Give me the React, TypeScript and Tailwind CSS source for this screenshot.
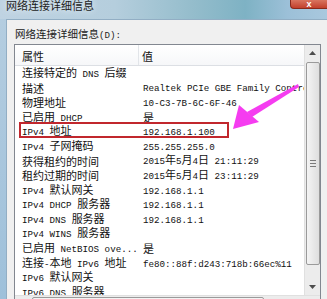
import React from 'react';

const rows: [string, string][] = [
  ['连接特定的 DNS 后缀', ''],
  ['描述', 'Realtek PCIe GBE Family Controller'],
  ['物理地址', '10-C3-7B-6C-6F-46'],
  ['已启用 DHCP', '是'],
  ['IPv4 地址', '192.168.1.100'],
  ['IPv4 子网掩码', '255.255.255.0'],
  ['获得租约的时间', '2015年5月4日 21:11:29'],
  ['租约过期的时间', '2015年5月4日 23:11:29'],
  ['IPv4 默认网关', '192.168.1.1'],
  ['IPv4 DHCP 服务器', '192.168.1.1'],
  ['IPv4 DNS 服务器', '192.168.1.1'],
  ['IPv4 WINS 服务器', ''],
  ['已启用 NetBIOS ove...', '是'],
  ['连接-本地 IPv6 地址', 'fe80::88f:d243:718b:66ec%11'],
  ['IPv6 默认网关', ''],
  ['IPv6 DNS 服务器', ''],
];

// CJK runs at 11px, latin runs in a narrow mono face like SimSun's half-width glyphs
const T = ({ s }: { s: string }) => (
  <>
    {s
      .split(/([\u0020-\u007e]+)/)
      .filter(Boolean)
      .map((p, i) =>
        /[\u0020-\u007e]/.test(p[0]) ? (
          <span key={i} className="font-['Liberation_Mono',monospace] text-[9.2px] whitespace-pre">
            {p}
          </span>
        ) : (
          <span key={i}>{p}</span>
        )
      )}
  </>
);

const VScroll = () => (
  <div className="absolute right-0 top-0 w-[16px] h-[250px] bg-[#ececec] border-l border-[#e0e0e0] flex flex-col items-center">
    <div className="h-[16px] w-full flex items-center justify-center">
      <svg width="7" height="4" viewBox="0 0 7 4"><path d="M0 4 L3.5 0 L7 4 Z" fill="#4d4d4d" /></svg>
    </div>
    <div className="mt-[1px] w-[14px] h-[203px] rounded-[2px] border border-[#9a9a9a] bg-[linear-gradient(to_right,#f4f4f4,#dedede)] flex items-center justify-center">
      <div className="flex flex-col gap-[2px]">
        <div className="w-[6px] h-[1px] bg-[#7a7a7a]" />
        <div className="w-[6px] h-[1px] bg-[#7a7a7a]" />
        <div className="w-[6px] h-[1px] bg-[#7a7a7a]" />
      </div>
    </div>
    <div className="flex-1" />
    <div className="h-[16px] w-full flex items-center justify-center">
      <svg width="7" height="4" viewBox="0 0 7 4"><path d="M0 0 L3.5 4 L7 0 Z" fill="#4d4d4d" /></svg>
    </div>
  </div>
);

const HScroll = () => (
  <div className="absolute left-0 right-0 top-[250px] h-[17px] bg-[#ececec] border-t border-[#e0e0e0] flex">
    <div className="w-[16px] flex items-center justify-center">
      <svg width="4" height="7" viewBox="0 0 4 7"><path d="M4 0 L0 3.5 L4 7 Z" fill="#4d4d4d" /></svg>
    </div>
    <div className="ml-[1px] mt-[1px] w-[232px] h-[14px] rounded-[2px] border border-[#9a9a9a] bg-[linear-gradient(to_bottom,#f4f4f4,#dedede)]" />
  </div>
);

export default function App() {
  return (
    <div className="relative w-[327px] h-[299px] overflow-hidden bg-[#f0f0f0] font-['Noto_Sans_CJK_SC','Noto_Sans',sans-serif] text-black">
      {/* title bar */}
      <div className="h-[19px] flex bg-[linear-gradient(to_right,#bfd3e2_0%,#b5cedd_35%,#93bccb_60%,#7eb2c4_75%,#9cc0d8_88%,#a9c8de_100%)]">
        <div className="pl-[6px] text-[11px] leading-[11px] text-[#1b1b1b] [text-shadow:0_0_6px_rgba(255,255,255,0.9)]">
          网络连接详细信息
        </div>
        <div className="ml-auto w-[37px] h-[9px] rounded-bl-[4px] bg-[linear-gradient(to_bottom,#d9745f,#c2402c)] border-b border-l border-[#8a2a1c] flex items-center justify-center">
          <span className="text-white text-[9px] leading-[9px] font-bold font-['Liberation_Sans',sans-serif]">x</span>
        </div>
      </div>

      <div className="flex h-[280px]">
        {/* left frame */}
        <div className="w-[6px] bg-[linear-gradient(to_bottom,#b4cde0,#9ec0da)]" />
        {/* client area */}
        <div className="flex-1 border-l border-t border-[#92aec4] bg-[#f0f0f0] pl-[7px] pt-[8px]">
          <div className="pl-[1px] text-[10.5px] leading-[11px] text-[#222]">
            网络连接详细信息<T s="(D):" />
          </div>
          <div className="mt-[3px] relative w-[307px] h-[270px] border border-[#828790] bg-white overflow-hidden text-[11px] text-[#111]">
            <div className="mr-[16px]">
              <div className="h-[21px] flex border-b border-[#dcdfe4] bg-[linear-gradient(to_bottom,#ffffff,#f6f7f9)]">
                <div className="w-[124px] shrink-0 pl-[7px] pt-[2px] flex items-center border-r border-[#e2e5e9]">属性</div>
                <div className="pl-[3px] pt-[2px] flex items-center">值</div>
              </div>
              {rows.map(([k, v], i) => (
                <div key={i} className="h-[14.6px] flex items-center whitespace-nowrap leading-[14px]">
                  <div className="w-[128px] shrink-0 pl-[7px] overflow-hidden"><T s={k} /></div>
                  <div className="min-w-0 overflow-hidden"><T s={v} /></div>
                </div>
              ))}
            </div>
            <VScroll />
            <HScroll />
          </div>
        </div>
      </div>

      {/* red highlight box */}
      <div className="absolute left-[19px] top-[122px] w-[210px] h-[16px] border-2 border-[#c1272d]" />

      {/* magenta arrow */}
      <svg className="absolute left-0 top-0" width="327" height="299" viewBox="0 0 327 299">
        <polygon points="298,84 299,87 252,117 247,112" fill="#f53cf0" />
        <polygon points="233,129 239,105 259,122" fill="#f53cf0" />
      </svg>
    </div>
  );
}
